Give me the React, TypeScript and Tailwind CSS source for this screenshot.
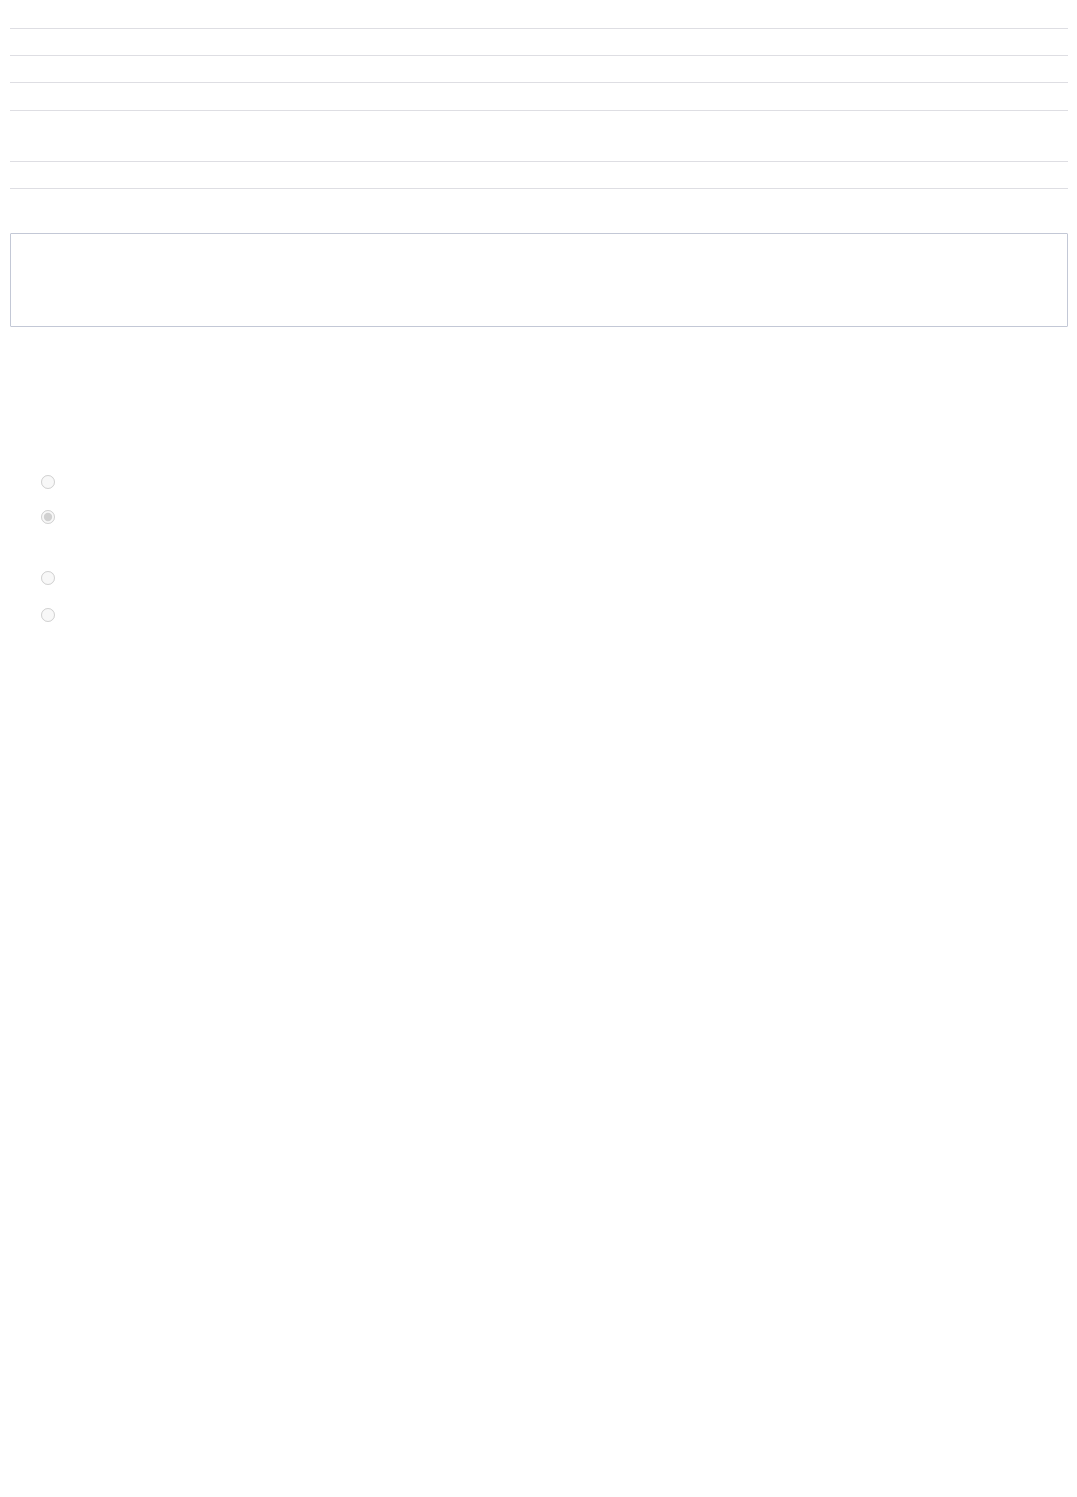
export default function App() {
  const rows = ['h-[29px]', 'h-[27px]', 'h-[27px]', 'h-[28px]', 'h-[51px]', 'h-[27px]']

  return (
    <div className="min-h-[1497px] bg-white pl-[10px] pr-[9px] font-['Liberation_Sans',sans-serif] text-sm text-gray-800">
      {/* Empty table rows, only their dividers show */}
      <div className="flex flex-col">
        {rows.map((h, i) => (
          <div key={i} className={`${h} border-b border-[#dedee3]`} />
        ))}
      </div>

      <div className="mt-[44px] h-[94px] rounded-[1px] border border-[#c3c8d6] bg-white" />

      <div className="flex flex-col pl-[31px] pt-[148px]">
        <input type="radio" name="opt" disabled className="m-0 block h-[14px] w-[14px]" />
        <input type="radio" name="opt" disabled defaultChecked className="m-0 mt-[21px] block h-[14px] w-[14px]" />
        <input type="radio" name="opt2" disabled className="m-0 mt-[47px] block h-[14px] w-[14px]" />
        <input type="radio" name="opt2" disabled className="m-0 mt-[23px] block h-[14px] w-[14px]" />
      </div>
    </div>
  )
}
